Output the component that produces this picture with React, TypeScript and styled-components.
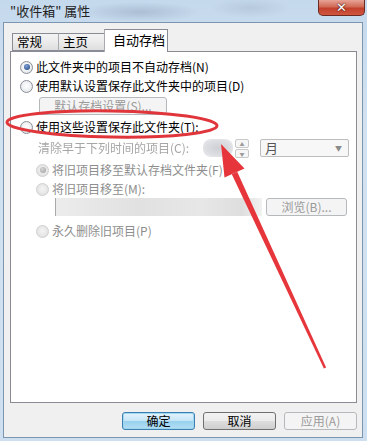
import styled, { createGlobalStyle, css } from "styled-components";

const GlobalStyle = createGlobalStyle`
  html, body { margin: 0; padding: 0; }
  body {
    font-family: "Noto Sans CJK SC", "DejaVu Sans", sans-serif;
    font-size: 12px;
    color: #000;
  }
`;

const Window = styled.div`
  position: relative;
  width: 367px;
  height: 441px;
  display: flex;
  flex-direction: column;
  overflow: hidden;
  background: linear-gradient(180deg, #c5d9ed 0%, #d3e2f1 30%, #cddff0 100%);
`;

const TitleBar = styled.div`
  height: 22px;
  flex: none;
  display: flex;
  align-items: center;
  padding-left: 10px;
  background:
    radial-gradient(ellipse 60px 10px at 140px 12px, rgba(120, 140, 165, 0.35), transparent),
    radial-gradient(ellipse 40px 10px at 250px 8px, rgba(150, 165, 185, 0.3), transparent);
`;

const Title = styled.span`
  font-size: 13px;
  line-height: 22px;
  color: #222;
`;

const CloseButton = styled.div`
  margin-left: auto;
  margin-right: 2px;
  align-self: flex-start;
  width: 47px;
  height: 16px;
  box-sizing: border-box;
  border: 1px solid #6b2a22;
  border-top: none;
  border-radius: 0 0 5px 5px;
  background: linear-gradient(180deg, #e7a497 0%, #d16a56 45%, #c2402c 55%, #d0563f 100%);
  display: flex;
  align-items: center;
  justify-content: center;
  color: #fff;
  font-family: "DejaVu Sans", sans-serif;
  font-weight: bold;
  font-size: 13px;
  text-shadow: 0 0 2px #4a1a14, 0 0 1px #4a1a14;
`;

const Client = styled.div`
  flex: 1;
  margin: 0 4px 3px 3px;
  border: 1px solid #7d96af;
  background: #f0f0f0;
  padding: 6px 5px 0 6px;
  display: flex;
  flex-direction: column;
`;

const TabRow = styled.div`
  height: 23px;
  display: flex;
  align-items: flex-end;
  padding-left: 2px;
  margin-bottom: -1px;
  position: relative;
  z-index: 1;
`;

const Tab = styled.div<{ $active?: boolean }>`
  box-sizing: border-box;
  border: 1px solid #898c95;
  line-height: 16px;
  ${(p) =>
    p.$active
      ? css`
          width: 64px;
          height: 23px;
          margin-left: -1px;
          padding: 2px 0 0 8px;
          border-bottom: none;
          background: #fff;
          font-size: 13px;
        `
      : css`
          width: 47px;
          height: 18px;
          margin-bottom: 1px;
          padding-left: 4px;
          background: linear-gradient(180deg, #f3f3f3 0%, #ebebeb 50%, #dedede 100%);
          font-size: 12.5px;
          & + & {
            margin-left: -1px;
            border-left: 1px solid #a9abb1;
          }
        `}
`;

const Panel = styled.div`
  height: 352px;
  box-sizing: border-box;
  border: 1px solid #898c95;
  background: #fff;
  padding-top: 6px;
  display: flex;
  flex-direction: column;
`;

const Row = styled.div<{ $indent?: number; $mt?: number; $disabled?: boolean }>`
  height: 18px;
  display: flex;
  align-items: center;
  padding-left: ${(p) => p.$indent ?? 0}px;
  margin-top: ${(p) => p.$mt ?? 0}px;
  color: ${(p) => (p.$disabled ? "#8e8e8e" : "#000")};
  line-height: 18px;
  white-space: nowrap;
`;

const Radio = styled.span<{ $checked?: boolean; $disabled?: boolean }>`
  position: relative;
  flex: none;
  width: 13px;
  height: 13px;
  margin-right: 3px;
  box-sizing: border-box;
  border-radius: 50%;
  border: 1px solid ${(p) => (p.$disabled ? "#cfcfcf" : "#8b9097")};
  background: ${(p) =>
    p.$disabled
      ? "radial-gradient(circle at 50% 45%, #f4f4f4 0%, #e6e6e6 60%, #d8d8d8 100%)"
      : "radial-gradient(circle at 50% 45%, #ffffff 0%, #eef0f2 55%, #cfd4da 100%)"};
  ${(p) =>
    p.$checked &&
    css`
      &::after {
        content: "";
        position: absolute;
        left: 2.5px;
        top: 2.5px;
        width: 6px;
        height: 6px;
        border-radius: 50%;
        background: ${p.$disabled
          ? "radial-gradient(circle at 40% 35%, #d6d6d6, #9c9c9c)"
          : "radial-gradient(circle at 40% 35%, #7fa2d6, #1b3e78)"};
      }
    `}
`;

const PushButton = styled.div<{ $width: number; $disabled?: boolean; $default?: boolean }>`
  width: ${(p) => p.$width}px;
  height: 18px;
  flex: none;
  box-sizing: border-box;
  border-radius: 3px;
  display: flex;
  align-items: center;
  justify-content: center;
  font-size: 12px;
  line-height: 16px;
  white-space: nowrap;
  ${(p) =>
    p.$disabled
      ? css`
          border: 1px solid #b5b9bc;
          background: #f4f4f4;
          color: #9a9a9a;
        `
      : p.$default
      ? css`
          border: 1px solid #3c7fb1;
          background: linear-gradient(180deg, #e5f4fc 0%, #c4e5f6 50%, #98d1ef 52%, #b4def3 100%);
          box-shadow: inset 0 0 0 1px #9fd6f0;
          color: #000;
        `
      : css`
          border: 1px solid #707070;
          background: linear-gradient(180deg, #f2f2f2 0%, #ebebeb 50%, #dddddd 52%, #cfcfcf 100%);
          color: #000;
        `}
`;

const Field = styled.div<{ $width: number }>`
  width: ${(p) => p.$width}px;
  height: 18px;
  flex: none;
  box-sizing: border-box;
`;

const BlurBox = styled(Field)`
  border-radius: 8px;
  background: radial-gradient(ellipse at 50% 50%, #cfd0d5 0%, #dcdde1 55%, #eeeff1 100%);
  filter: blur(0.6px);
`;

const PathBox = styled(Field)`
  border-left: 1px solid #a9a9a9;
  background: linear-gradient(90deg, #ececec 0%, #e1e1e1 40%, #e7e7e7 70%, #dedede 90%, #f2f2f2 100%);
  filter: blur(0.5px);
`;

const Spin = styled.div`
  width: 14px;
  height: 18px;
  flex: none;
  display: flex;
  flex-direction: column;
  gap: 1px;
  margin-left: 2px;
`;

const SpinHalf = styled.div`
  flex: 1;
  box-sizing: border-box;
  border: 1px solid #c9c9c9;
  border-radius: 2px;
  background: #f6f6f6;
  color: #9a9a9a;
  font-size: 5px;
  line-height: 7px;
  text-align: center;
`;

const Select = styled(Field)`
  margin-left: 11px;
  border: 1px solid #bdbdbd;
  border-radius: 2px;
  background: #f7f7f7;
  display: flex;
  align-items: center;
  padding: 0 6px 0 4px;
  color: #555;
  font-size: 13px;
  & > span:last-child {
    margin-left: auto;
    font-size: 7px;
    color: #8a8a8a;
  }
`;

const Label = styled.span<{ $width?: number }>`
  display: inline-block;
  width: ${(p) => (p.$width ? `${p.$width}px` : "auto")};
  color: #a6a6a6;
  filter: blur(0.3px);
`;

const Footer = styled.div`
  flex: 1;
  display: flex;
  justify-content: flex-end;
  align-items: flex-start;
  gap: 8px;
  padding-top: 9px;
`;

const Overlay = styled.svg`
  position: absolute;
  left: 0;
  top: 0;
  pointer-events: none;
`;

export default function App() {
  return (
    <>
      <GlobalStyle />
      <Window>
        <TitleBar>
          <Title>"收件箱" 属性</Title>
          <CloseButton>✕</CloseButton>
        </TitleBar>
        <Client>
          <TabRow>
            <Tab>常规</Tab>
            <Tab>主页</Tab>
            <Tab $active>自动存档</Tab>
          </TabRow>
          <Panel>
            <Row $indent={9}>
              <Radio $checked />
              此文件夹中的项目不自动存档(N)
            </Row>
            <Row $indent={9} $mt={1}>
              <Radio />
              使用默认设置保存此文件夹中的项目(D)
            </Row>
            <Row $indent={28} $mt={2}>
              <PushButton $width={128} $disabled>
                默认存档设置(S)...
              </PushButton>
            </Row>
            <Row $indent={9} $mt={3}>
              <Radio />
              使用这些设置保存此文件夹(T):
            </Row>
            <Row $indent={27} $mt={3}>
              <Label $width={165}>清除早于下列时间的项目(C):</Label>
              <BlurBox $width={30} />
              <Spin>
                <SpinHalf>▲</SpinHalf>
                <SpinHalf>▼</SpinHalf>
              </Spin>
              <Select $width={89}>
                <span>月</span>
                <span>▼</span>
              </Select>
            </Row>
            <Row $indent={25} $mt={4} $disabled>
              <Radio $checked $disabled />
              将旧项目移至默认存档文件夹(F)
            </Row>
            <Row $indent={25} $mt={1} $disabled>
              <Radio $disabled />
              将旧项目移至(M):
            </Row>
            <Row $indent={44}>
              <PathBox $width={207} />
              <PushButton $width={81} $disabled style={{ marginLeft: 4 }}>
                浏览(B)...
              </PushButton>
            </Row>
            <Row $indent={25} $mt={6} $disabled>
              <Radio $disabled />
              永久删除旧项目(P)
            </Row>
          </Panel>
          <Footer>
            <PushButton $width={73} $default>
              确定
            </PushButton>
            <PushButton $width={73}>取消</PushButton>
            <PushButton $width={73} $disabled>
              应用(A)
            </PushButton>
          </Footer>
        </Client>
        <Overlay width={367} height={441} viewBox="0 0 367 441">
          <ellipse
            cx={112}
            cy={124}
            rx={105}
            ry={13}
            fill="none"
            stroke="#e0353a"
            strokeWidth={3}
            transform="rotate(1 112 124)"
          />
          <polygon
            points="237.2,171.7 231.8,174.3 323.9,368.5 326.1,367.5"
            fill="#e6363b"
          />
          <polygon points="221,144 244.5,168.4 224.5,177.6" fill="#e6363b" />
        </Overlay>
      </Window>
    </>
  );
}
